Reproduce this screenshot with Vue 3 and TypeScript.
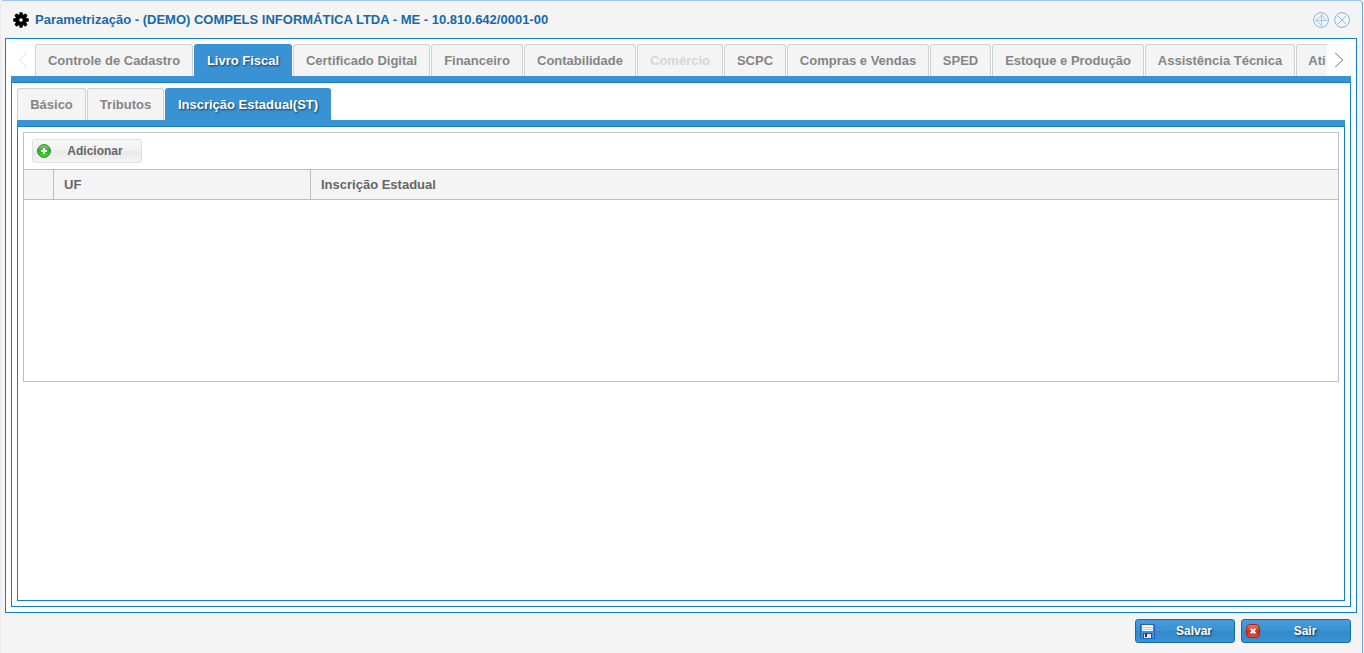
<script setup lang="ts">
interface Tab {
  label: string
  width: number
  active?: boolean
  disabled?: boolean
}

const mainTabs: Tab[] = [
  { label: 'Controle de Cadastro', width: 158 },
  { label: 'Livro Fiscal', width: 98, active: true },
  { label: 'Certificado Digital', width: 137 },
  { label: 'Financeiro', width: 92 },
  { label: 'Contabilidade', width: 112 },
  { label: 'Comércio', width: 86, disabled: true },
  { label: 'SCPC', width: 62 },
  { label: 'Compras e Vendas', width: 142 },
  { label: 'SPED', width: 61 },
  { label: 'Estoque e Produção', width: 152 },
  { label: 'Assistência Técnica', width: 150 },
  { label: 'Ati', width: 42 },
]

const subTabs: Tab[] = [
  { label: 'Básico', width: 69 },
  { label: 'Tributos', width: 77 },
  { label: 'Inscrição Estadual(ST)', width: 166, active: true },
]
</script>

<template>
  <div class="window">
    <header class="titlebar">
      <svg class="gear" width="16" height="16" viewBox="0 0 16 16">
        <g fill="#000">
          <rect v-for="a in [0, 45, 90, 135]" :key="a" x="6.3" y="0.2" width="3.4" height="15.6" rx=".8" :transform="`rotate(${a} 8 8)`" />
          <circle cx="8" cy="8" r="5.9" />
        </g>
        <circle cx="8" cy="8" r="1.8" fill="#f4f4f4" />
      </svg>
      <h1 class="title">Parametrização - (DEMO) COMPELS INFORMÁTICA LTDA - ME - 10.810.642/0001-00</h1>
      <div class="tools">
        <svg width="16" height="16" viewBox="0 0 16 16" fill="none" stroke="#a3c9ea">
          <circle cx="8" cy="8" r="7.4" stroke="#86b4d8" />
          <path d="M8.5 2.5V13.5M2.5 8.5H13.5M8.5 2.5L13 8.5M2.5 8.5L8 3.8M3 8.5L8.5 13.5" />
        </svg>
        <svg width="16" height="16" viewBox="0 0 16 16" fill="none" stroke="#96bfe2">
          <circle cx="8" cy="8" r="7.4" stroke="#86b4d8" />
          <path d="M4 4L12 12M12 4L4 12" />
        </svg>
      </div>
    </header>

    <main class="frame">
      <nav class="main-nav">
        <span class="scroll left">
          <svg width="10" height="16" viewBox="0 0 10 16" fill="none" stroke="#dcdcdc"><path d="M8.7 1L1.2 8L8.7 15" /></svg>
        </span>
        <div class="tabs clipped">
          <div v-for="t in mainTabs" :key="t.label" class="tab" :class="{ active: t.active, disabled: t.disabled }" :style="{ width: t.width + 'px' }">
            <span>{{ t.label }}</span>
          </div>
        </div>
        <span class="scroll right">
          <svg width="10" height="16" viewBox="0 0 10 16" fill="none" stroke="#777"><path d="M1.2 1L8.8 8L1.2 15" /></svg>
        </span>
      </nav>
      <div class="bar"></div>
      <section class="panel outer">
        <nav class="tabs">
          <div v-for="t in subTabs" :key="t.label" class="tab" :class="{ active: t.active }" :style="{ width: t.width + 'px' }">
            <span>{{ t.label }}</span>
          </div>
        </nav>
        <div class="bar"></div>
        <section class="panel inner">
          <div class="grid">
            <div class="toolbar">
              <button class="btn-add">
                <svg width="14" height="14" viewBox="0 0 14 14">
                  <defs>
                    <linearGradient id="green" x1="0" y1="0" x2="0" y2="1">
                      <stop offset="0" stop-color="#7fd66f" />
                      <stop offset=".5" stop-color="#2fae22" />
                      <stop offset="1" stop-color="#55d83c" />
                    </linearGradient>
                  </defs>
                  <circle cx="7" cy="7" r="6.4" fill="url(#green)" stroke="#258824" />
                  <path d="M7 4V10M4 7H10" stroke="#fff" stroke-width="2.2" />
                </svg>
                <span>Adicionar</span>
              </button>
            </div>
            <div class="head">
              <div class="cell"></div>
              <div class="cell">UF</div>
              <div class="cell">Inscrição Estadual</div>
            </div>
          </div>
        </section>
      </section>
    </main>

    <footer class="actions">
      <button class="btn save">
        <svg width="15" height="15" viewBox="0 0 15 15">
          <path d="M.5 .5H14.5V14.5H1.5L.5 13.5Z" fill="#3d8af0" stroke="#1f62c0" />
          <rect x="2" y="1" width="11" height="6" fill="#f7f7f5" />
          <path d="M2 3.5H13M2 5.5H13" stroke="#cfcfcb" />
          <rect x="3" y="9" width="9" height="5" fill="#1f4fa8" />
          <rect x="4" y="10" width="7" height="4" fill="#e3e6ea" />
          <rect x="5" y="10" width="2" height="3" fill="#333" />
        </svg>
        <span>Salvar</span>
      </button>
      <button class="btn exit">
        <svg width="14" height="14" viewBox="0 0 14 14">
          <defs>
            <linearGradient id="red" x1="0" y1="0" x2="0" y2="1">
              <stop offset="0" stop-color="#f07a67" />
              <stop offset=".55" stop-color="#d82b1c" />
              <stop offset="1" stop-color="#ef5037" />
            </linearGradient>
          </defs>
          <rect x=".5" y=".5" width="13" height="13" rx="3.8" fill="url(#red)" stroke="#a81d1b" />
          <path d="M4.7 4.7L9.3 9.3M9.3 4.7L4.7 9.3" stroke="#fff" stroke-width="2.3" />
        </svg>
        <span>Sair</span>
      </button>
    </footer>
  </div>
</template>

<style>
body {
  background: #fff;
  overflow: hidden;
}
</style>

<style scoped>
* {
  box-sizing: border-box;
}
.window {
  width: 1363px;
  height: 653px;
  display: flex;
  flex-direction: column;
  padding: 0 5px 0 4px;
  background: #f4f4f4;
  border-top: 1px solid #9cc4ea;
  border-right: 1px solid #62a4e6;
  border-left: 1px solid #e8eaec;
  border-radius: 4px 4px 0 0;
  font: bold 13px "Liberation Sans", Arial, sans-serif;
}
.titlebar {
  height: 37px;
  display: flex;
  align-items: center;
  padding: 0 7px 0 8px;
}
.gear {
  margin-top: 1px;
}
.title {
  margin: 1px 0 0 6px;
  flex: 1;
  color: #1769a8;
  font-size: 13px;
  line-height: 16px;
  white-space: nowrap;
}
.tools {
  display: flex;
  gap: 5px;
  margin-top: 1px;
}
.frame {
  width: 1352px;
  height: 575px;
  border: 1px solid #147cc8;
  background: #fff;
  padding: 5px;
}
.main-nav {
  display: flex;
  height: 32px;
}
.scroll {
  flex: none;
  display: flex;
  align-items: center;
  width: 24px;
  padding-left: 7px;
}
.tabs {
  display: flex;
  gap: 1px;
  height: 32px;
}
.clipped {
  width: 1292px;
  flex: none;
  overflow: hidden;
}
.tab {
  flex: none;
  height: 32px;
  display: flex;
  justify-content: center;
  align-items: center;
  color: #858585;
  background: #f4f4f4;
  border: 1px solid #d0d0d0;
  border-bottom: 0;
  border-radius: 3px 3px 0 0;
  white-space: nowrap;
}
.tab.active {
  color: #fff;
  background: #3892d4;
  border-color: #3892d4;
  text-shadow: 1px 1px 2px rgba(0, 0, 0, 0.6);
}
.tab.disabled {
  color: #d6d6d6;
}
.bar {
  height: 6px;
  background: #3892d4;
}
.panel {
  border: 1px solid #147cc8;
  padding: 5px;
}
.outer {
  height: 525px;
}
.inner {
  height: 475px;
}
.grid {
  height: 250px;
  border: 1px solid #c0c0c0;
}
.toolbar {
  height: 36px;
  padding: 6px 8px;
}
button {
  font: bold 12px "Liberation Sans", Arial, sans-serif;
  display: flex;
  align-items: center;
  border-radius: 3px;
}
button svg {
  flex: none;
}
button span {
  flex: 1;
  text-align: center;
}
.btn-add {
  width: 110px;
  height: 24px;
  padding: 0 2px 0 4px;
  color: #666;
  border: 1px solid #e0e0e0;
  background: linear-gradient(#f7f7f7, #f1f1f1 50%, #e9e9e9 51%, #f4f4f4);
}
.head {
  display: flex;
  height: 31px;
  background: #f4f4f4;
  border-top: 1px solid #c0c0c0;
  border-bottom: 1px solid #c0c0c0;
}
.cell {
  padding-left: 10px;
  line-height: 29px;
  color: #666;
  font-size: 13px;
}
.cell:nth-child(1) {
  width: 30px;
  border-right: 1px solid #c0c0c0;
}
.cell:nth-child(2) {
  width: 257px;
  border-right: 1px solid #c0c0c0;
}
.actions {
  display: flex;
  justify-content: flex-end;
  gap: 6px;
  padding: 6px 6px 0 0;
}
.btn {
  height: 24px;
  color: #fff;
  border: 1px solid #126daf;
  background: linear-gradient(#4b9cd8, #3892d4 50%, #358ac8 51%, #3892d4);
  text-shadow: 1px 1px 2px rgba(0, 0, 0, 0.65);
}
.save {
  width: 100px;
  padding: 0 1px 0 4px;
}
.exit {
  width: 110px;
  padding: 0 0 0 4px;
}
</style>
